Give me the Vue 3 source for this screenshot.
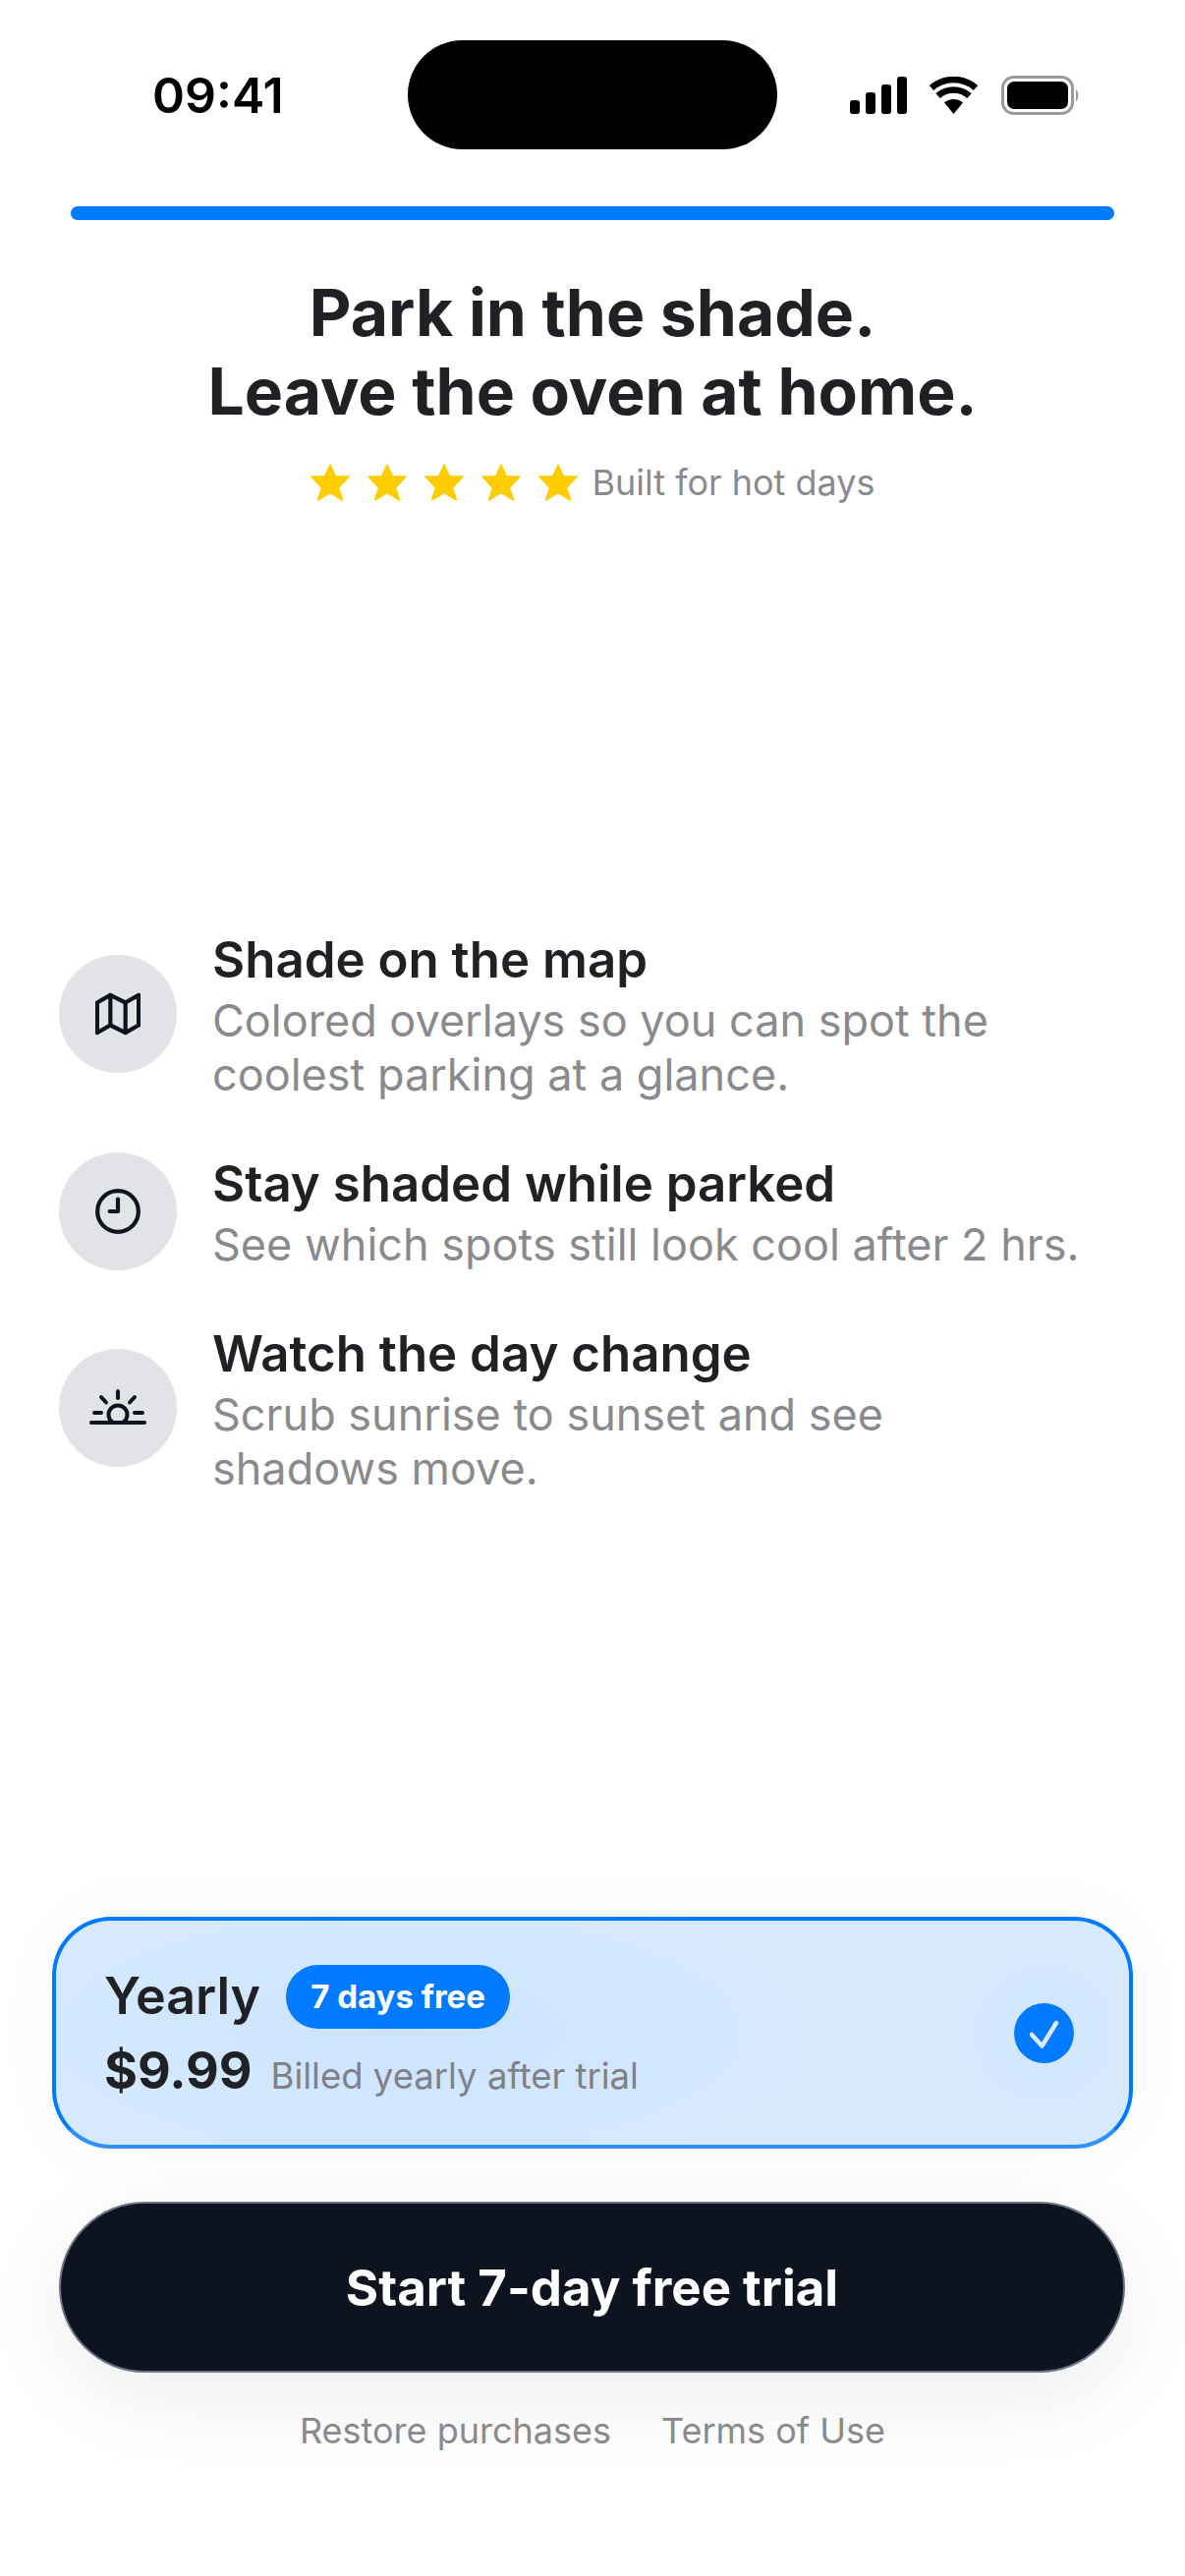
<template>
  <div class="pagina">
    <header class="barra-status">
      <span class="hora">09:41</span>
      <div class="ilha"></div>
      <div class="icones-status">
        <svg class="icone-sinal" viewBox="0 0 58 38" aria-hidden="true">
          <rect x="0" y="24" width="10" height="14" rx="3" />
          <rect x="16" y="16" width="10" height="22" rx="3" />
          <rect x="32" y="8" width="10" height="30" rx="3" />
          <rect x="48" y="0" width="10" height="38" rx="3" />
        </svg>
        <svg class="icone-wifi" viewBox="0 0 51 38" aria-hidden="true">
          <path class="wifi-ponta" d="M25.5 38 L16 26.5 A15 15 0 0 1 35 26.5 Z" />
          <path class="wifi-arco" d="M9.5 19.5 A24 24 0 0 1 41.5 19.5" />
          <path class="wifi-arco" d="M3 11.5 A34 34 0 0 1 48 11.5" />
        </svg>
        <svg class="icone-bateria" viewBox="0 0 80 40" aria-hidden="true">
          <rect class="bateria-borda" x="1.5" y="1.5" width="71" height="37" rx="11" />
          <rect x="6" y="6" width="62" height="28" rx="7" />
          <path class="bateria-ponta" d="M76 14 C79 15 79 25 76 26 Z" />
        </svg>
      </div>
    </header>

    <div class="progresso"></div>

    <h1 class="titulo">Park in the shade.<br />Leave the oven at home.</h1>

    <div class="avaliacao">
      <div class="estrelas">
        <svg v-for="n in 5" :key="n" class="estrela" viewBox="0 0 40 38" aria-hidden="true">
          <path d="M20 1 L25.5 13 L39 13 L28.5 24.5 L32.5 37 L20 29.5 L7.5 37 L11.5 24.5 L1 13 L14.5 13 Z" />
        </svg>
      </div>
      <span class="avaliacao-texto">Built for hot days</span>
    </div>

    <section class="recursos">
      <div class="recurso">
        <div class="recurso-icone">
          <svg class="traco traco-mapa" viewBox="0 0 24 24" width="46" height="46" aria-hidden="true">
            <path d="M1 6v16l7-4 8 4 7-4V2l-7 4-8-4-7 4z" />
            <path d="M8 2v16M16 6v16" />
          </svg>
        </div>
        <div class="recurso-texto">
          <h3>Shade on the map</h3>
          <p>Colored overlays so you can spot the coolest parking at a glance.</p>
        </div>
      </div>
      <div class="recurso">
        <div class="recurso-icone">
          <svg class="traco" viewBox="0 0 24 24" width="50" height="50" aria-hidden="true">
            <circle cx="12" cy="12" r="10" />
            <path d="M12 6v6H8" />
          </svg>
        </div>
        <div class="recurso-texto">
          <h3>Stay shaded while parked</h3>
          <p>See which spots still look cool after 2 hrs.</p>
        </div>
      </div>
      <div class="recurso">
        <div class="recurso-icone">
          <svg class="traco traco-sol" viewBox="0 0 60 40" width="60" height="40" aria-hidden="true">
            <path d="M3 35h54M24.9 35A9.5 9.5 0 1 1 35.1 35" />
            <path d="M30 3v7M13 9l5 5.5M47 9l-5 5.5M6 25h7M47 25h8" />
          </svg>
        </div>
        <div class="recurso-texto">
          <h3>Watch the day change</h3>
          <p>Scrub sunrise to sunset and see shadows move.</p>
        </div>
      </div>
    </section>

    <section class="rodape">
      <div class="plano">
        <div class="plano-info">
          <div class="plano-linha">
            <span class="plano-nome">Yearly</span>
            <span class="selo">7 days free</span>
          </div>
          <div class="plano-linha preco-linha">
            <span class="preco">$9.99</span>
            <span class="cobranca">Billed yearly after trial</span>
          </div>
        </div>
        <div class="marcado">
          <svg viewBox="0 0 61 61" width="61" height="61" aria-hidden="true">
            <path d="M18 32 L28.5 43.5 L43 20" />
          </svg>
        </div>
      </div>

      <button class="botao">Start 7-day free trial</button>

      <nav class="links">
        <a>Restore purchases</a>
        <a>Terms of Use</a>
      </nav>
    </section>
  </div>
</template>

<script setup>
</script>

<style>
html,
body {
  background: #fff;
}
</style>

<style scoped>
.pagina {
  width: 1206px;
  height: 2622px;
  display: flex;
  flex-direction: column;
  box-sizing: border-box;
  overflow: hidden;
  font-family: Inter, "Liberation Sans", sans-serif;
  color: #1f2124;
  background: #fff;
}

.barra-status {
  display: flex;
  align-items: center;
  height: 111px;
  margin-top: 41px;
  padding: 0 49px 0 155px;
}

.hora {
  width: 260px;
  font-size: 50px;
  font-weight: 600;
  color: #000;
}

.ilha {
  width: 376px;
  height: 111px;
  border-radius: 56px;
  background: #000;
}

.icones-status {
  display: flex;
  align-items: center;
  margin-left: 74px;
}

.icone-sinal {
  width: 58px;
  height: 38px;
}

.icone-wifi {
  width: 51px;
  height: 38px;
  margin-left: 22px;
}

.wifi-arco {
  fill: none;
  stroke: #000;
  stroke-width: 6.5;
}

.icone-bateria {
  width: 80px;
  height: 40px;
  margin-left: 23px;
}

.bateria-borda {
  fill: none;
  stroke: #9a9a9a;
  stroke-width: 3;
}

.bateria-ponta {
  fill: #9a9a9a;
}

.progresso {
  height: 14px;
  margin: 58px 72px 0;
  border-radius: 7px;
  background: #007aff;
}

.titulo {
  margin: 54px 0 0;
  font-size: 66px;
  line-height: 80px;
  font-weight: 700;
  text-align: center;
  color: #1f2124;
}

.avaliacao {
  display: flex;
  align-items: center;
  justify-content: center;
  height: 40px;
  margin-top: 33px;
}

.estrelas {
  display: flex;
  gap: 18px;
}

.estrela {
  width: 40px;
  height: 38px;
  fill: #ffcc00;
  stroke: #ffcc00;
  stroke-width: 1.5;
  stroke-linejoin: round;
}

.avaliacao-texto {
  margin-left: 15px;
  font-size: 36px;
  color: #8a8a8e;
}

.recursos {
  display: flex;
  flex-direction: column;
  gap: 50px;
  margin-top: 432px;
  padding: 0 60px;
}

.recurso {
  display: flex;
  align-items: center;
  gap: 36px;
}

.recurso-icone {
  flex: none;
  display: flex;
  align-items: center;
  justify-content: center;
  width: 120px;
  height: 120px;
  border-radius: 50%;
  background: #e1e3e6;
}

.traco {
  fill: none;
  stroke: #0e1320;
  stroke-width: 2;
  stroke-linecap: round;
  stroke-linejoin: round;
}

.traco-mapa {
  stroke-width: 2.2;
}

.traco-sol {
  stroke-width: 4;
}

.recurso-texto {
  max-width: 884px;
}

.recurso-texto h3 {
  margin: 0;
  font-size: 51px;
  line-height: 68px;
  font-weight: 600;
  color: #1f2124;
}

.recurso-texto p {
  margin: 0;
  font-size: 45px;
  line-height: 55px;
  color: #8a8a8e;
}

.rodape {
  display: flex;
  flex-direction: column;
  margin-top: auto;
  padding-bottom: 123px;
}

.plano {
  display: flex;
  align-items: center;
  justify-content: space-between;
  box-sizing: border-box;
  height: 236px;
  margin: 0 53px;
  padding: 0 56px 0 49px;
  border: 4px solid #007aff;
  border-bottom-color: #2f90ff;
  border-radius: 60px;
  background: radial-gradient(ellipse 420px 150px at 32% 50%, #cde4ff, #d6e9ff);
  box-shadow: 0 0 80px rgba(0, 40, 90, 0.03);
}

.plano-linha {
  display: flex;
  align-items: center;
}

.plano-nome {
  font-size: 52px;
  font-weight: 600;
  line-height: 66px;
}

.selo {
  margin-left: 26px;
  padding: 0 25px;
  height: 65px;
  line-height: 65px;
  border-radius: 33px;
  background: #007aff;
  color: #fff;
  font-size: 33px;
  font-weight: 700;
}

.preco-linha {
  margin-top: 11px;
  align-items: baseline;
}

.preco {
  font-size: 52px;
  font-weight: 700;
}

.cobranca {
  margin-left: 19px;
  font-size: 36.5px;
  color: #7e8188;
}

.marcado {
  width: 61px;
  height: 61px;
  border-radius: 50%;
  background: #007aff;
  box-shadow: 0 0 70px rgba(0, 122, 255, 0.07);
}

.marcado svg {
  display: block;
  fill: none;
  stroke: #dbeafe;
  stroke-width: 4.5;
  stroke-linecap: round;
  stroke-linejoin: round;
}

.botao {
  display: block;
  box-sizing: border-box;
  height: 174px;
  margin: 54px 61px 0 60px;
  border: 2px solid #6d7486;
  border-radius: 87px;
  background: #0e1320;
  color: #fff;
  font-family: inherit;
  font-size: 51px;
  font-weight: 700;
  box-shadow: 0 24px 90px rgba(15, 20, 40, 0.08);
}

.links {
  display: flex;
  justify-content: center;
  gap: 51px;
  margin-top: 34px;
  font-size: 36px;
  line-height: 50px;
  color: #8a8a8e;
}
</style>
